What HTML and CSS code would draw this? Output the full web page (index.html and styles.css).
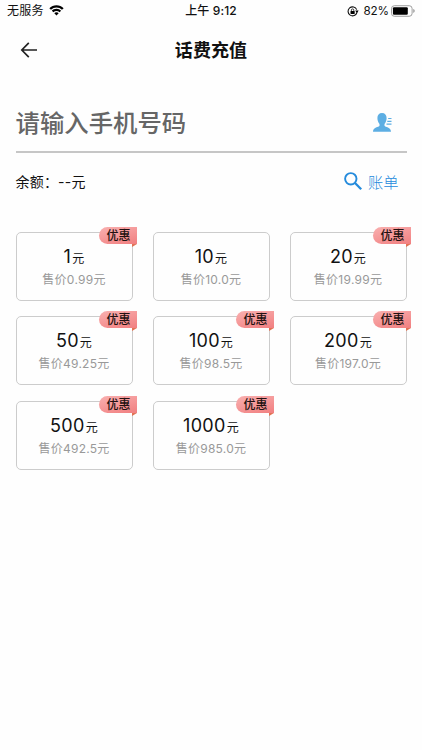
FILE: index.html
```html
<!DOCTYPE html>
<html lang="zh-CN">
<head>
<meta charset="utf-8">
<title>话费充值</title>
<link rel="stylesheet" href="styles.css">
</head>
<body>
<div class="status">
  <div class="status-left"><span class="carrier">无服务</span>
    <svg class="wifi" viewBox="0 0 16 12"><path d="M8 0.300C5 .3 2.200 1.400.2 3.500L2 5.300a8.500 8.500 0 0 1 12 0l1.800-1.800C13.800 1.400 11 .3 8 .3ZM8 4.100c-2 0-3.800.8-5.100 2.100l1.800 1.800a4.700 4.700 0 0 1 6.600 0l1.800-1.800A7.200 7.200 0 0 0 8 4.100ZM8 8c-1 0-1.800.4-2.400 1L8 11.400 10.400 9C9.800 8.400 9 8 8 8Z"/></svg>
  </div>
  <div class="time">上午 9:12</div>
  <div class="status-right">
    <svg class="lock" viewBox="0 0 12 11"><path d="M9.900 6.500A4.500 4.500 0 1 1 9.700 3.600" fill="none" stroke="#111" stroke-width="1.100"/><path d="M8.200 4.600h3.400L10 7.200Z"/><rect x="3.500" y="4.900" width="4.200" height="3.100" rx=".4"/><path d="M4.400 5V4.100a1.200 1.200 0 0 1 2.400 0V5" fill="none" stroke="#111" stroke-width=".8"/></svg>
    <span class="percent">82%</span>
    <svg class="battery" viewBox="0 0 25 12"><rect x=".5" y=".5" width="21.500" height="11" rx="3" fill="none" stroke="#999"/><rect x="2" y="2" width="15.500" height="8" rx="1.200"/><path d="M23.200 4v4c1-.4 1.500-1.200 1.500-2s-.5-1.600-1.500-2Z" fill="#999"/></svg>
  </div>
</div>
<header class="nav">
  <svg class="back" viewBox="0 0 18 16"><path d="M17 8H2M8.800 .8 1.800 8l7 7.200" fill="none" stroke="#222" stroke-width="1.700"/></svg>
  <h1 class="title">话费充值</h1>
</header>
<main class="main">
  <div class="phone">
    <span class="placeholder">请输入手机号码</span>
    <svg class="contact" viewBox="0 0 19 19"><path d="M9 0C6 0 4.400 2 4.400 5c0 2.300.8 4.700 2.100 6v1.800C5.800 14.200 0 14.200 0 18.800h18c0-4.600-5.800-4.600-6.500-6V11c1.300-1.300 2.100-3.700 2.100-6C13.600 2 12 0 9 0Z"/><path d="M15.200 5.500h3.300M14.300 8.300h4.200M13.500 11.100h5" stroke="#5daee3" stroke-width="1.200"/></svg>
  </div>
  <div class="account">
    <span class="balance">余额：--元</span>
    <span class="bill"><svg class="search" viewBox="0 0 18 18"><circle cx="6.800" cy="6.800" r="5.700" fill="none" stroke="#258bdc" stroke-width="1.900"/><path d="m11 11 6.200 6.200" stroke="#258bdc" stroke-width="2.300"/></svg>账单</span>
  </div>
  <div class="grid">
    <div class="card"><div class="amount">1<small>元</small></div><div class="price">售价0.99元</div><span class="tag">优惠</span></div>
    <div class="card"><div class="amount">10<small>元</small></div><div class="price">售价10.0元</div></div>
    <div class="card"><div class="amount">20<small>元</small></div><div class="price">售价19.99元</div><span class="tag">优惠</span></div>
    <div class="card"><div class="amount">50<small>元</small></div><div class="price">售价49.25元</div><span class="tag">优惠</span></div>
    <div class="card"><div class="amount">100<small>元</small></div><div class="price">售价98.5元</div><span class="tag">优惠</span></div>
    <div class="card"><div class="amount">200<small>元</small></div><div class="price">售价197.0元</div><span class="tag">优惠</span></div>
    <div class="card"><div class="amount">500<small>元</small></div><div class="price">售价492.5元</div><span class="tag">优惠</span></div>
    <div class="card"><div class="amount">1000<small>元</small></div><div class="price">售价985.0元</div><span class="tag">优惠</span></div>
  </div>
</main>
</body>
</html>
```
FILE: styles.css
```css
* { box-sizing: border-box; }
html { height: 750px; overflow: hidden; background: #fefefe; }
body { margin: 0; height: 750px; color: #111; font-family: Inter, "Noto Sans CJK SC", sans-serif; overflow: hidden; }
svg { display: block; flex: none; overflow: visible; }
.status { height: 22px; padding: 0 7px; display: grid; grid-template-columns: 1fr auto 1fr; align-items: center; font-size: 12px; line-height: 22px; }
.status-left, .status-right { display: flex; align-items: center; }
.status-right { justify-content: flex-end; height: 22px; }
.carrier { letter-spacing: .2px; }
.wifi { width: 15px; height: 11px; margin-left: 5px; margin-bottom: 1px; }
.time { font-weight: 500; letter-spacing: .1px; }
.lock { width: 12px; height: 11px; margin-right: 4px; }
.percent { font-size: 11.700px; letter-spacing: -.1px; }
.battery { width: 24px; height: 12px; margin-left: 2px; margin-bottom: 1px; }
.nav { height: 56px; padding: 0 20px; display: grid; grid-template-columns: 1fr auto 1fr; align-items: center; }
.back { width: 18px; height: 16px; margin-bottom: 1px; }
.title { margin: 0; padding-top: 2px; font-size: 18px; line-height: 26px; font-weight: 600; letter-spacing: .1px; color: #111; }
.main { padding: 0 15.500px; }
.phone { height: 75px; border-bottom: 2px solid #c6c6c6; padding: 15px 15px 0 0; display: flex; align-items: center; justify-content: space-between; }
.placeholder { padding-top: 2px; font-size: 24.400px; line-height: 36px; font-weight: 500; color: #666; }
.contact { width: 19px; height: 19px; fill: #5daee3; }
.account { height: 57px; padding-right: 8px; display: flex; align-items: center; justify-content: space-between; }
.balance { font-size: 14px; letter-spacing: .2px; margin-bottom: 2px; }
.bill { display: flex; align-items: center; gap: 5.500px; margin-bottom: 2px; font-size: 15.300px; font-weight: 300; color: #258bdc; }
.search { width: 18px; height: 18px; }
.grid { margin-top: 21.500px; display: grid; grid-template-columns: repeat(3, 117px); column-gap: 20px; row-gap: 15.500px; }
.card { position: relative; height: 69px; border: 1px solid #ccc; border-radius: 5px; padding-top: 12px; text-align: center; }
.amount { font-size: 18px; line-height: 24px; letter-spacing: .3px; }
.amount small { font-size: 12px; margin-left: 1px; }
.price { margin-top: -1px; font-size: 12px; line-height: 20px; letter-spacing: .25px; color: #999; }
.tag { position: absolute; top: -6px; right: -5px; width: 38px; height: 17px; padding-left: 2px; border-radius: 9px 0 0 9px; background: linear-gradient(165deg, #f9b0b0, #f17f80); font-size: 12px; line-height: 17px; font-weight: 500; color: #211; text-align: center; }
.tag::after { content: ""; position: absolute; right: 0; top: 17px; border-top: 3px solid #e17355; border-right: 5px solid transparent; }
```
